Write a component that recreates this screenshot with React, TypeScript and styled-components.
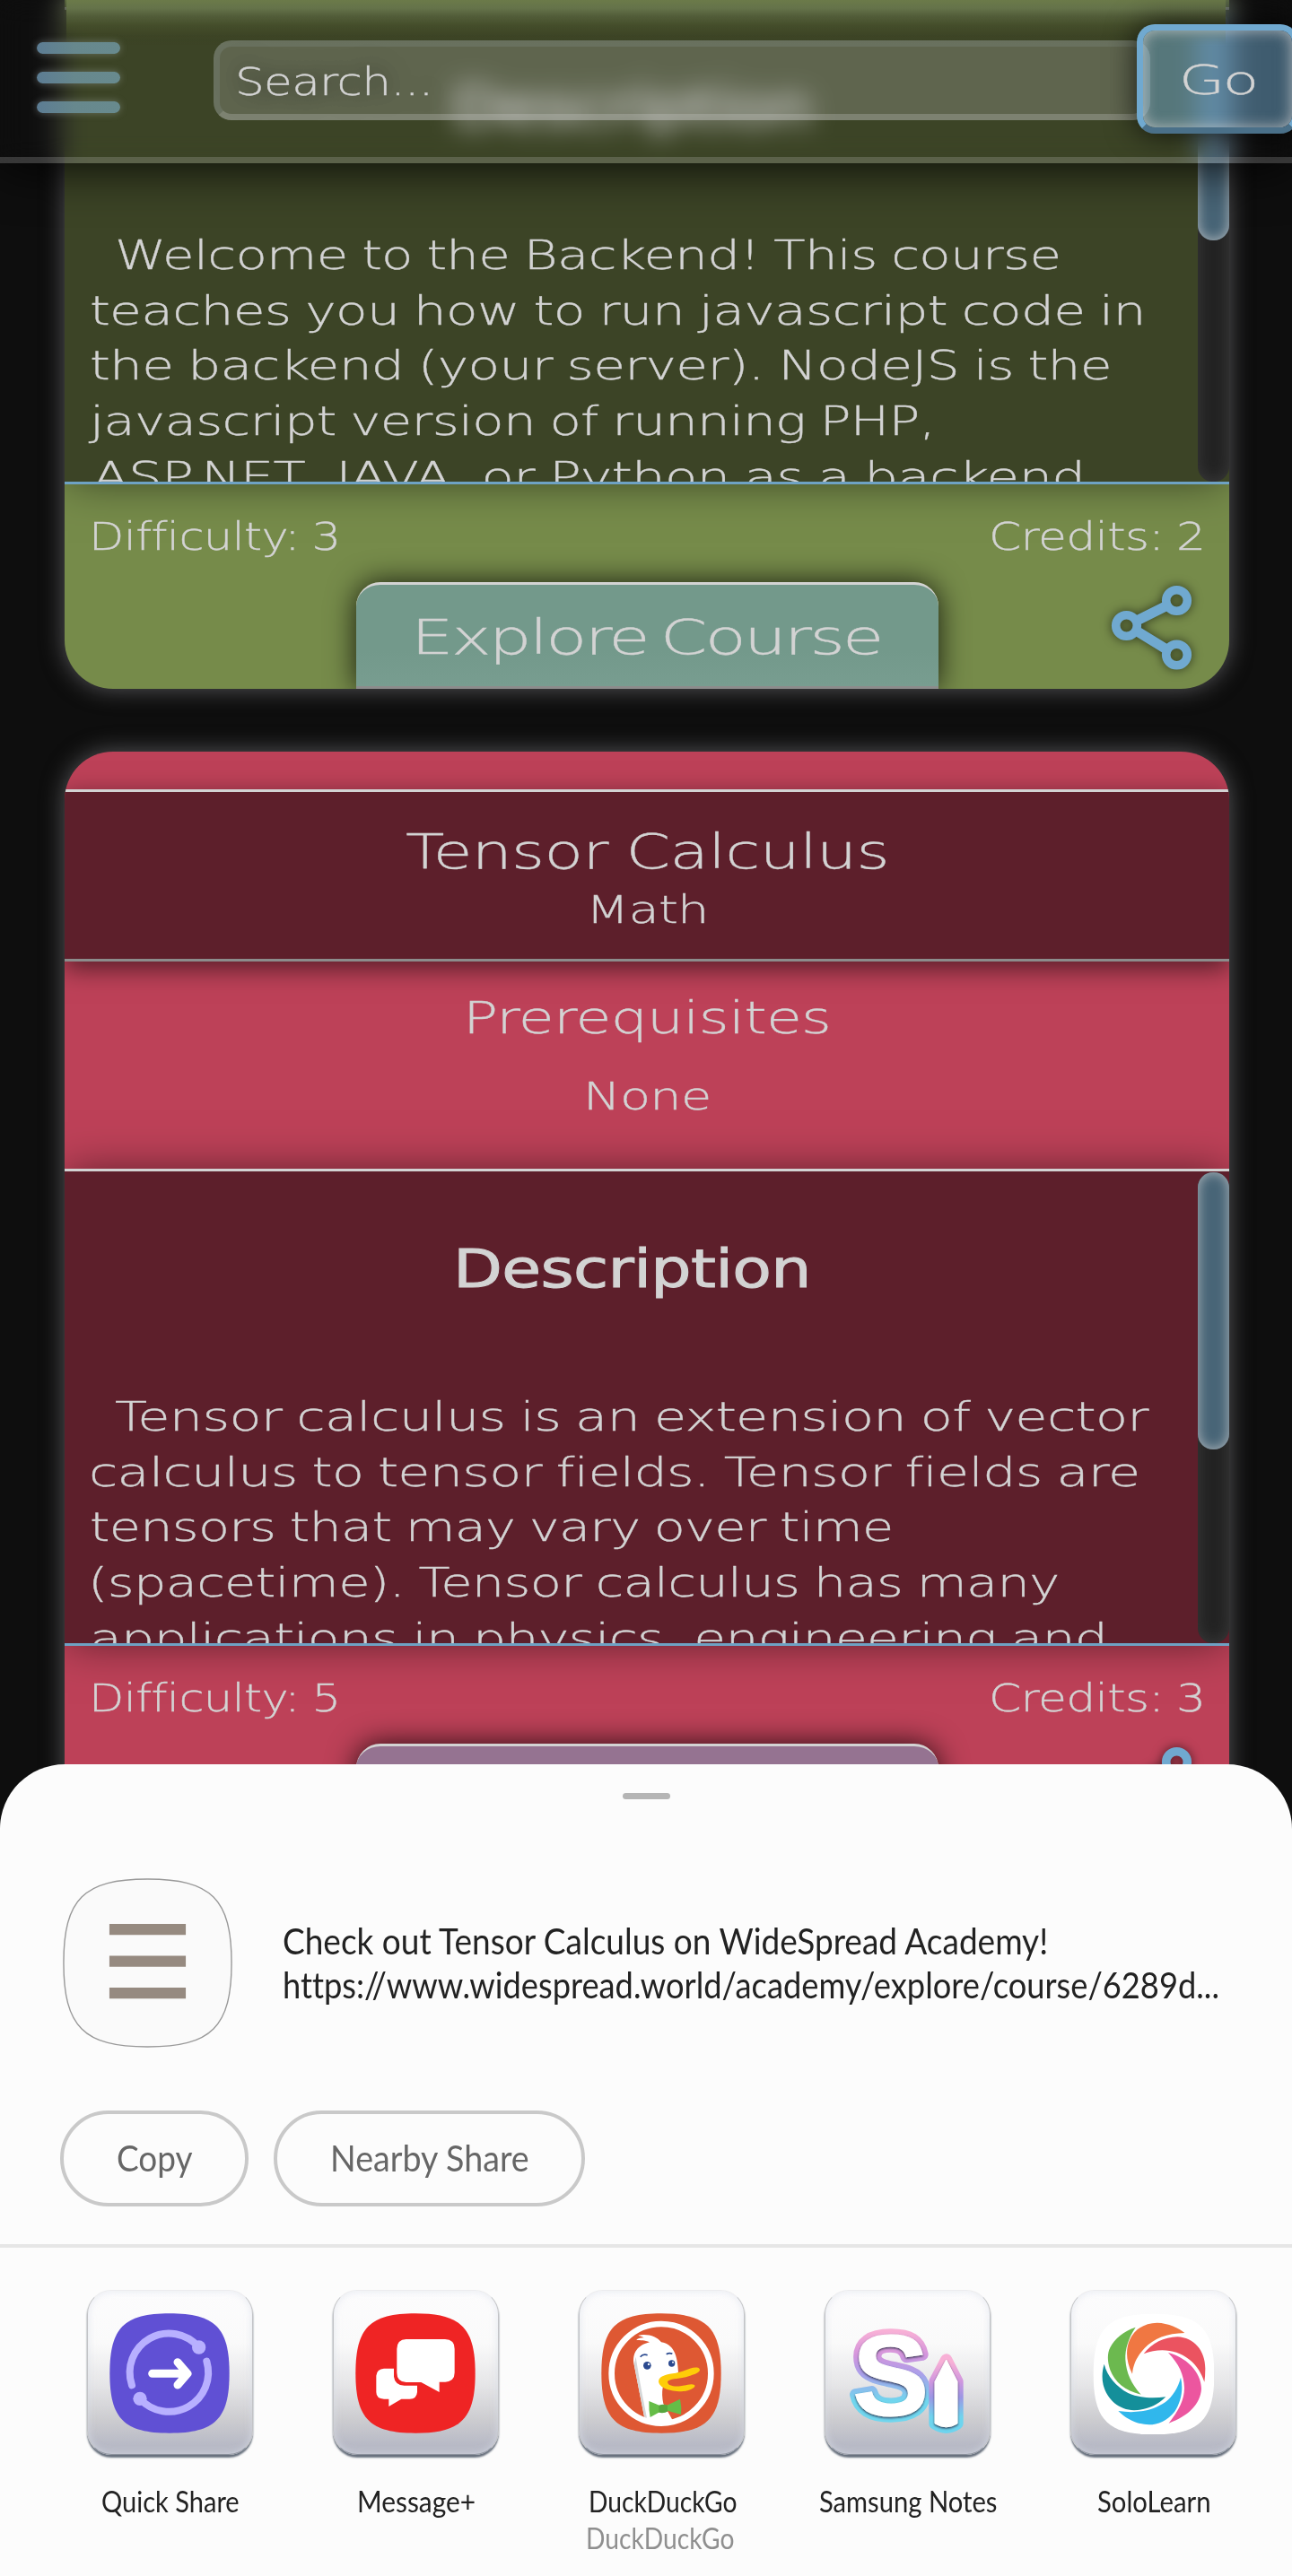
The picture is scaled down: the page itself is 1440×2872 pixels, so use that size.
import React, { useLayoutEffect, useRef, useState } from "react";
import styled, { createGlobalStyle, css } from "styled-components";

const wide = `"DejaVu Sans", "DejaVu Sans Light", sans-serif`;
const narrow = `Lato, "Open Sans", sans-serif`;

const GlobalStyle = createGlobalStyle`
  * { box-sizing: border-box; }
  body { margin: 0; background: #0e0e0e; }
  button { margin: 0; padding: 0; border: 0; background: none; cursor: pointer; }
`;

/* ---------- text that is stretched to a set measure ---------- */

const Measure = styled.span<{ $width: number }>`
  display: block;
  width: ${(p) => p.$width}px;
  white-space: pre;
  text-align: left;
`;

const Stretch = styled.span`
  display: inline-block;
  transform-origin: 0 50%;
`;

function Fit({ width, children }: { width: number; children: string }) {
  const ref = useRef<HTMLSpanElement>(null);
  const [scale, setScale] = useState(1);
  useLayoutEffect(() => {
    if (ref.current) setScale(width / ref.current.offsetWidth);
  }, [width, children]);
  return (
    <Measure $width={width}>
      <Stretch ref={ref} style={{ transform: `scaleX(${scale})` }}>
        {children}
      </Stretch>
    </Measure>
  );
}

/* ---------- page ---------- */

const wideSpacing = css`
  letter-spacing: -0.035em;
  word-spacing: -0.1em;
  -webkit-text-stroke: 0.35px currentColor;
`;

const Page = styled.div`
  position: relative;
  width: 1440px;
  height: 2872px;
  overflow: hidden;
  background: #0e0e0e;
  color: #d3d3d3;
  font-family: ${wide};
  font-weight: 200;
  ${wideSpacing}
`;

const CourseList = styled.main`
  display: flex;
  flex-direction: column;
  gap: 70px;
  width: 1298px;
  margin: 0 70px 0 72px;
`;

/* ---------- top bar ---------- */

const TopBar = styled.header`
  position: absolute;
  inset: 0 0 auto 0;
  z-index: 2;
  display: flex;
  align-items: flex-start;
  height: 182px;
  padding-left: 41px;
  border-bottom: 7px solid rgba(211, 211, 211, 0.21);
  background: linear-gradient(
      #6b7a49,
      #65734a 9px,
      #525d39 18px,
      rgba(68, 77, 42, 0.95) 29px,
      rgba(60, 68, 36, 0.6) 40px,
      rgba(60, 68, 36, 0) 50px
    )
    74px 0 / 1292px 50px no-repeat;
  backdrop-filter: blur(14px);
  box-shadow: 0 0 60px #000;
`;

const Burger = styled.button`
  flex: none;
  display: flex;
  flex-direction: column;
  gap: 20px;
  width: 93px;
  margin-top: 47px;
`;

const BurgerBar = styled.span`
  height: 13px;
  border-radius: 7px;
  background: linear-gradient(90deg, #5c7c93, #67888d 45%, #688a8e);
  box-shadow: 0 0 8px rgba(180, 190, 190, 0.4);
`;

const SearchBox = styled.div`
  flex: none;
  width: 1044px;
  height: 89px;
  margin: 45px -15px 0 104px;
  padding: 7px 0 0 17px;
  border: 7px solid;
  border-color: rgba(140, 150, 145, 0.24) rgba(140, 150, 145, 0.24) rgba(211, 211, 211, 0.26);
  border-radius: 20px;
  background: rgba(211, 211, 211, 0.24);
  font-size: 42px;
  line-height: 66px;
  text-shadow: 0 0 24px rgba(0, 0, 0, 0.9);
`;

const GoButton = styled.button`
  flex: none;
  display: flex;
  width: 180px;
  height: 122px;
  margin-top: 27px;
  padding: 14px 0 0 40px;
  border: 7px solid #70a9d0;
  border-bottom-color: #4a7089;
  border-radius: 20px;
  background: rgba(112, 169, 208, 0.5);
  background-clip: padding-box;
  box-shadow: 0 0 34px rgba(0, 0, 0, 0.75), inset 0 0 16px rgba(211, 211, 211, 0.75);
  color: #d3d3d3;
  font: 200 44px / 84px ${wide};
  ${wideSpacing}
`;

/* ---------- course card ---------- */

const Card = styled.article<{ $tone: string; $scrolled: boolean }>`
  flex: none;
  display: flex;
  flex-direction: column;
  height: ${(p) => (p.$scrolled ? 768 : 1225)}px;
  padding-top: ${(p) => (p.$scrolled ? 8 : 42)}px;
  overflow: hidden;
  border-radius: ${(p) => (p.$scrolled ? "0 0 54px 54px" : "54px")};
  background: ${(p) => p.$tone};
  box-shadow: 0 0 26px rgba(150, 150, 155, 0.55);
`;

const TitleBand = styled.section<{ $dark: string }>`
  position: relative;
  z-index: 1;
  display: flex;
  flex-direction: column;
  align-items: center;
  height: 192px;
  padding-top: 34px;
  border-top: 3px solid #d3d3d3;
  border-bottom: 3px solid #8c8c8c;
  background: ${(p) => p.$dark};
  box-shadow: 0 8px 26px rgba(0, 0, 0, 0.55);
`;

const CourseTitle = styled.h2`
  margin: 0 0 6px;
  font-size: 54px;
  font-weight: 200;
  line-height: 66px;
`;

const Small = styled.div`
  font-size: 42px;
  line-height: 52px;
`;

const Prerequisites = styled.section`
  display: flex;
  flex-direction: column;
  align-items: center;
  gap: 32px;
  height: 231px;
  padding-top: 33px;
`;

const SectionTitle = styled.h3`
  margin: 0;
  font-size: 50px;
  font-weight: 200;
  line-height: 60px;
`;

const Description = styled.section<{ $dark: string }>`
  display: flex;
  flex: none;
  height: 532px;
  border-top: 3px solid #d3d3d3;
  border-bottom: 3px solid #6ea2c4;
  background: ${(p) => p.$dark};
  box-shadow: 0 0 46px -4px rgba(0, 0, 0, 0.55);
`;

const DescriptionBody = styled.div`
  flex: 1;
  overflow: hidden;
  padding: 73px 0 0 26px;
`;

const DescriptionTitle = styled.h3`
  display: flex;
  justify-content: center;
  margin: 0 24px 98px 0;
  font-size: 59px;
  font-weight: 400;
  line-height: 72px;
  -webkit-text-stroke: 1px currentColor;
`;

const Line = styled.div<{ $indent?: number }>`
  height: 61.7px;
  padding-left: ${(p) => p.$indent ?? 0}px;
  font-size: 45px;
  line-height: 61.7px;
`;

const Track = styled.div`
  width: 35px;
  margin-top: 1px;
  border-radius: 17px;
  background: #222;
  box-shadow: inset 0 0 18px rgba(90, 90, 90, 0.45);
`;

const Thumb = styled.div<{ $length: number }>`
  height: ${(p) => p.$length}px;
  border-radius: 17px;
  background: #486577;
  box-shadow: inset 0 0 14px rgba(211, 211, 211, 0.75);
`;

const Footer = styled.footer`
  flex: none;
  display: flex;
  flex-direction: column;
  justify-content: space-between;
  height: 228px;
  padding-top: 33px;
`;

const Stats = styled.div`
  display: flex;
  justify-content: space-between;
  padding: 0 27px 0 27px;
`;

const Actions = styled.div`
  display: grid;
  grid-template-columns: 1fr 649px 1fr;
  height: 119px;
`;

const Explore = styled.button<{ $fill: string }>`
  display: flex;
  justify-content: center;
  padding: 26px 2px 0 0;
  border-top: 3px solid #d3d3d3;
  border-bottom: 3px solid #8c8c8c;
  border-radius: 27px 27px 0 0;
  background: ${(p) => p.$fill};
  box-shadow: 0 0 32px rgba(0, 0, 0, 0.8);
  color: #d3d3d3;
  font: 200 54px / 66px ${wide};
  ${wideSpacing}
`;

const ShareButton = styled.button`
  justify-self: end;
  align-self: start;
  margin: -4px 33px 0 0;
  line-height: 0;
`;

const ShareSvg = styled.svg`
  filter: drop-shadow(0 0 6px rgba(0, 0, 0, 0.6));
`;

function ShareIcon() {
  return (
    <ShareSvg width="106" height="110" viewBox="1231 645 106 110" fill="none" stroke="#70a9d0">
      <path d="M1301 675 1266 692.500M1301 724.500 1266 703" strokeWidth="11" />
      <circle cx="1311.500" cy="669.500" r="11.800" strokeWidth="9.600" />
      <circle cx="1255.500" cy="697.500" r="11.800" strokeWidth="9.600" />
      <circle cx="1311.500" cy="730" r="11.800" strokeWidth="9.600" />
    </ShareSvg>
  );
}

type Sized = { text: string; width: number; indent?: number };

interface Course {
  id: string;
  heading?: { title: Sized; subject: Sized; prerequisite: Sized };
  lines: Sized[];
  difficulty: string;
  credits: string;
  tone: string;
  dark: string;
  button: string;
  thumb: number;
}

const courses: Course[] = [
  {
    id: "backend",
    lines: [
      { text: "Welcome to the Backend! This course", width: 1054, indent: 30 },
      { text: "teaches you how to run javascript code in", width: 1177, indent: 2 },
      { text: "the backend (your server). NodeJS is the", width: 1139, indent: 2 },
      { text: "javascript version of running PHP,", width: 942, indent: 2 },
      { text: "ASP.NET, JAVA, or Python as a backend", width: 1106, indent: 5 },
    ],
    difficulty: "Difficulty: 3",
    credits: "Credits: 2",
    tone: "#768b4a",
    dark: "#3c4426",
    button: "linear-gradient(#73998b 65%, #789d90)",
    thumb: 256,
  },
  {
    id: "tensor",
    heading: {
      title: { text: "Tensor Calculus", width: 539 },
      subject: { text: "Math", width: 137 },
      prerequisite: { text: "None", width: 142 },
    },
    lines: [
      { text: "Tensor calculus is an extension of vector", width: 1152, indent: 30 },
      { text: "calculus to tensor fields. Tensor fields are", width: 1171, indent: 1 },
      { text: "tensors that may vary over time", width: 896, indent: 2 },
      { text: "(spacetime). Tensor calculus has many", width: 1082 },
      { text: "applications in physics, engineering and", width: 1134, indent: 2 },
    ],
    difficulty: "Difficulty: 5",
    credits: "Credits: 3",
    tone: "#bd4158",
    dark: "#5d1f2b",
    button: "#957391",
    thumb: 309,
  },
];

function CourseCard({ course }: { course: Course }) {
  const { heading } = course;
  return (
    <Card $tone={course.tone} $scrolled={!heading}>
      {heading && (
        <>
          <TitleBand $dark={course.dark}>
            <CourseTitle>
              <Fit width={heading.title.width}>{heading.title.text}</Fit>
            </CourseTitle>
            <Small>
              <Fit width={heading.subject.width}>{heading.subject.text}</Fit>
            </Small>
          </TitleBand>
          <Prerequisites>
            <SectionTitle>
              <Fit width={410}>Prerequisites</Fit>
            </SectionTitle>
            <Small>
              <Fit width={heading.prerequisite.width}>{heading.prerequisite.text}</Fit>
            </Small>
          </Prerequisites>
        </>
      )}
      <Description $dark={course.dark}>
        <DescriptionBody>
          <DescriptionTitle>
            <Fit width={399}>Description</Fit>
          </DescriptionTitle>
          {course.lines.map((line) => (
            <Line key={line.text} $indent={line.indent}>
              <Fit width={line.width}>{line.text}</Fit>
            </Line>
          ))}
        </DescriptionBody>
        <Track>
          <Thumb $length={course.thumb} />
        </Track>
      </Description>
      <Footer>
        <Stats>
          <Small>
            <Fit width={280}>{course.difficulty}</Fit>
          </Small>
          <Small>
            <Fit width={241}>{course.credits}</Fit>
          </Small>
        </Stats>
        <Actions>
          <span />
          <Explore $fill={course.button}>
            <Fit width={524}>Explore Course</Fit>
          </Explore>
          <ShareButton aria-label="Share">
            <ShareIcon />
          </ShareButton>
        </Actions>
      </Footer>
    </Card>
  );
}

/* ---------- share sheet ---------- */

const Sheet = styled.aside`
  position: absolute;
  inset: 1967px 0 0 0;
  z-index: 3;
  display: flex;
  flex-direction: column;
  border-radius: 72px 72px 0 0;
  background: #fcfcfc;
  color: #222;
  font-family: ${narrow};
  font-weight: 400;
  font-variant-ligatures: none;
  letter-spacing: normal;
  word-spacing: normal;
  -webkit-text-stroke: 0;
`;

const Handle = styled.div`
  align-self: center;
  width: 53px;
  height: 7px;
  margin-top: 32px;
  border-radius: 4px;
  background: #b5b5b5;
`;

const Preview = styled.div`
  display: flex;
  align-items: center;
  gap: 56px;
  height: 189px;
  margin: 88px 0 0 70px;
`;

const PreviewText = styled.div`
  margin-top: -2px;
  font-size: 41px;
  line-height: 49px;
`;

const Chips = styled.div`
  display: flex;
  gap: 28px;
  margin: 70px 0 0 67px;
`;

const Chip = styled.button<{ $width: number }>`
  display: flex;
  justify-content: center;
  width: ${(p) => p.$width}px;
  height: 107px;
  padding-top: 24px;
  border: 4px solid #c9c9c9;
  border-radius: 54px;
  color: #666;
  font: 400 40px / 50px ${narrow};
`;

const Divider = styled.hr`
  width: 100%;
  height: 4px;
  margin: 42px 0 47px;
  border: 0;
  background: #e6e6e6;
`;

const Apps = styled.div`
  display: grid;
  grid-template-columns: repeat(5, 274px);
  margin-left: 52px;
`;

const AppItem = styled.div`
  display: flex;
  flex-direction: column;
  align-items: center;
`;

const Tile = styled.div`
  display: flex;
  justify-content: center;
  width: 185px;
  height: 184px;
  padding-top: 25px;
  border: 1px solid;
  border-color: #ececee #c2c3c6 #8b919c;
  border-radius: 27px;
  background: linear-gradient(#fcfcfd, #fafafa 32%, #e6e6e8 57%, #cbcbcf 80%, #b8bac6 94%);
  box-shadow: 0 3px 2px #68717e, inset 0 0 8px rgba(220, 224, 235, 0.7);
`;

const labelText = css`
  font-size: 33px;
  line-height: 41px;
`;

const AppName = styled.div`
  ${labelText}
  margin-top: 31px;
  padding-left: 2px;
`;

const AppDetail = styled.div`
  ${labelText}
  margin-right: 4px;
  color: #8f8f8f;
`;

const squircle = "M200 0C352 0 400 48 400 200S352 400 200 400 0 352 0 200 48 0 200 0Z";

function SiteIcon() {
  return (
    <svg width="189" height="189" viewBox="-2 -2 404 404">
      <path d={squircle} fill="#fafafa" stroke="#999" strokeWidth="3" />
      <path d="M109 107H291V133H109ZM109 183H291V209H109ZM109 259H291V285H109Z" fill="#968a80" />
    </svg>
  );
}

function QuickShareIcon() {
  return (
    <svg width="134" height="134" viewBox="186 176 402 402">
      <path d={squircle} transform="translate(187 177)" fill="#6050d4" />
      <g fill="none" stroke="#b8b0ff" strokeWidth="24" strokeLinecap="round">
        <path d="M261 417A131 131 0 0 1 485 290" />
        <path d="M511 337A131 131 0 0 1 288 462" />
      </g>
      <circle cx="485" cy="290" r="23" fill="#b8b0ff" />
      <circle cx="288" cy="462" r="23" fill="#b8b0ff" />
      <path d="M329 378H445M414 340 447 378 414 416" fill="none" stroke="#fff" strokeWidth="27" strokeLinecap="round" strokeLinejoin="round" />
    </svg>
  );
}

function MessageIcon() {
  return (
    <svg width="134" height="134" viewBox="1008 176 402 402">
      <path d={squircle} transform="translate(1009 177)" fill="#ef2424" />
      <g fill="#fff">
        <path d="M1178 263H1308Q1340 264 1340 295V375Q1340 404 1309 406H1289V440L1228 407H1178Q1147 406 1147 375V295Q1148 264 1178 263Z" />
        <path d="M1104 361H1137V388Q1140 416 1172 418H1215V440Q1213 463 1190 463H1162L1120 488V463H1104Q1078 462 1078 440V385Q1080 362 1104 361Z" />
      </g>
    </svg>
  );
}

function DuckIcon() {
  return (
    <svg width="134" height="134" viewBox="210 176 402 402">
      <path d={squircle} transform="translate(211 177)" fill="#de5833" />
      <circle cx="411" cy="378" r="166" fill="none" stroke="#fff" strokeWidth="20" />
      <path d="M354 522C342 460 330 400 320 348C312 308 334 282 372 273C356 265 340 268 328 266C334 258 344 259 353 258C344 252 336 252 334 250C370 244 396 255 411 273C452 279 466 318 468 374L440 388C414 400 410 440 418 478L448 532C420 552 378 544 354 522Z" fill="#fff" />
      <path d="M320 346C330 400 342 460 354 522L363 526C350 460 338 400 326 322Z" fill="#d5d7d8" />
      <path d="M402 403C405 384 430 380 460 376C490 372 510 354 534 358C548 366 535 377 515 382C480 398 440 392 432 405C432 420 455 422 475 420C495 418 510 410 522 416C530 425 500 438 478 438C440 437 402 425 402 403Z" fill="#fecd08" />
      <path d="M370 470 408 486Q420 478 430 484L474 463Q480 490 477 515L432 502Q422 512 408 505L374 524Q369 500 370 470Z" fill="#65bd47" />
      <path d="M403 484Q418 478 432 484V505Q418 512 403 508Z" fill="#57a63e" />
      <circle cx="364" cy="351" r="13" fill="#2b4a8f" />
      <circle cx="446" cy="344" r="11" fill="#2b4a8f" />
      <circle cx="369" cy="347" r="3.500" fill="#fff" />
      <circle cx="450" cy="340" r="3" fill="#fff" />
      <path d="M341 322Q350 311 365 316M428 313Q438 307 448 312" fill="none" stroke="#2b4a8f" strokeWidth="5" />
    </svg>
  );
}

const NotesLetter = styled.text`
  font: 700 384px "Liberation Sans", Arial, sans-serif;
`;

function NotesIcon() {
  return (
    <svg width="134" height="134" viewBox="1034 176 402 402">
      <defs>
        <linearGradient id="letterEdge" gradientUnits="userSpaceOnUse" x1="0" y1="220" x2="0" y2="540">
          <stop offset="0.05" stopColor="#f8b0d6" />
          <stop offset="0.3" stopColor="#d394dc" />
          <stop offset="0.5" stopColor="#aaa0ea" />
          <stop offset="0.78" stopColor="#70d6ee" />
        </linearGradient>
        <linearGradient id="penEdge" gradientUnits="userSpaceOnUse" x1="0" y1="312" x2="0" y2="576">
          <stop offset="0.1" stopColor="#f8b0d6" />
          <stop offset="0.35" stopColor="#cf96de" />
          <stop offset="0.55" stopColor="#9c96e4" />
          <stop offset="0.8" stopColor="#6ed4ee" />
        </linearGradient>
        <filter id="edgeShade" x="-20%" y="-20%" width="140%" height="140%">
          <feDropShadow dx="0" dy="4" stdDeviation="3" floodColor="#1c2440" floodOpacity="0.9" />
        </filter>
      </defs>
      <g strokeLinejoin="round" strokeWidth="40">
        <NotesLetter x="1180" y="517" textAnchor="middle" fill="url(#letterEdge)" stroke="url(#letterEdge)">S</NotesLetter>
        <path d="M1366 332 1403 405V545Q1366 570 1328 545V405Z" stroke="url(#penEdge)" />
      </g>
      <g fill="#fff" stroke="#fff" strokeWidth="3" filter="url(#edgeShade)">
        <NotesLetter x="1180" y="517" textAnchor="middle" aria-hidden>S</NotesLetter>
        <path d="M1366 332 1403 405V545Q1366 568 1328 545V405Z" />
      </g>
    </svg>
  );
}

function SoloIcon() {
  return (
    <svg width="135" height="135" viewBox="352 295 405 405">
      <path d={squircle} transform="translate(354 297) scale(1.010)" fill="#fff" />
      <path d="M484 498C462 455 462 415 475 385C490 350 525 327 567 327C605 328 640 345 659 361C600 362 555 380 525 412C500 438 487 465 484 498Z" fill="#f07742" />
      <path d="M522 431C550 395 590 375 635 374C690 376 728 420 728 480Q728 505 725 525C715 495 700 470 675 450C630 415 575 410 522 431Z" fill="#eb5360" />
      <path d="M604 427C660 440 715 490 715 548C712 600 670 640 606 663C640 620 658 585 658 545C657 500 640 465 604 427Z" fill="#ec569f" />
      <path d="M646 510C655 550 648 590 625 625C600 655 570 668 540 668C500 667 465 650 437 622C500 632 555 620 595 592C620 572 637 545 646 510Z" fill="#30b7ec" />
      <path d="M390 465C400 505 430 540 470 562C510 580 555 580 596 575C565 605 530 619 490 620C440 618 400 585 387 535C381 510 384 485 390 465Z" fill="#148f9a" />
      <path d="M495 342C470 380 460 415 461 450C464 495 480 530 513 567C460 555 425 525 410 485C400 455 400 430 410 410C425 380 455 355 495 342Z" fill="#6cb94f" />
    </svg>
  );
}

const apps = [
  { name: "Quick Share", width: 154, Icon: QuickShareIcon },
  { name: "Message+", width: 132, Icon: MessageIcon },
  { name: "DuckDuckGo", width: 165, Icon: DuckIcon, detail: "DuckDuckGo" },
  { name: "Samsung Notes", width: 198, Icon: NotesIcon },
  { name: "SoloLearn", width: 127, Icon: SoloIcon },
];

export default function App() {
  return (
    <>
      <GlobalStyle />
      <Page>
        <CourseList>
          {courses.map((course) => (
            <CourseCard key={course.id} course={course} />
          ))}
        </CourseList>

        <TopBar>
          <Burger aria-label="Menu">
            <BurgerBar />
            <BurgerBar />
            <BurgerBar />
          </Burger>
          <SearchBox>
            <Fit width={220}>Search...</Fit>
          </SearchBox>
          <GoButton>
            <Fit width={87}>Go</Fit>
          </GoButton>
        </TopBar>

        <Sheet>
          <Handle />
          <Preview>
            <SiteIcon />
            <PreviewText>
              <Fit width={853}>Check out Tensor Calculus on WideSpread Academy!</Fit>
              <Fit width={1044}>https://www.widespread.world/academy/explore/course/6289d...</Fit>
            </PreviewText>
          </Preview>
          <Chips>
            <Chip $width={210}>
              <Fit width={85}>Copy</Fit>
            </Chip>
            <Chip $width={347}>
              <Fit width={222}>Nearby Share</Fit>
            </Chip>
          </Chips>
          <Divider />
          <Apps>
            {apps.map(({ name, width, Icon, detail }) => (
              <AppItem key={name}>
                <Tile>
                  <Icon />
                </Tile>
                <AppName>
                  <Fit width={width}>{name}</Fit>
                </AppName>
                {detail && (
                  <AppDetail>
                    <Fit width={width}>{detail}</Fit>
                  </AppDetail>
                )}
              </AppItem>
            ))}
          </Apps>
        </Sheet>
      </Page>
    </>
  );
}
